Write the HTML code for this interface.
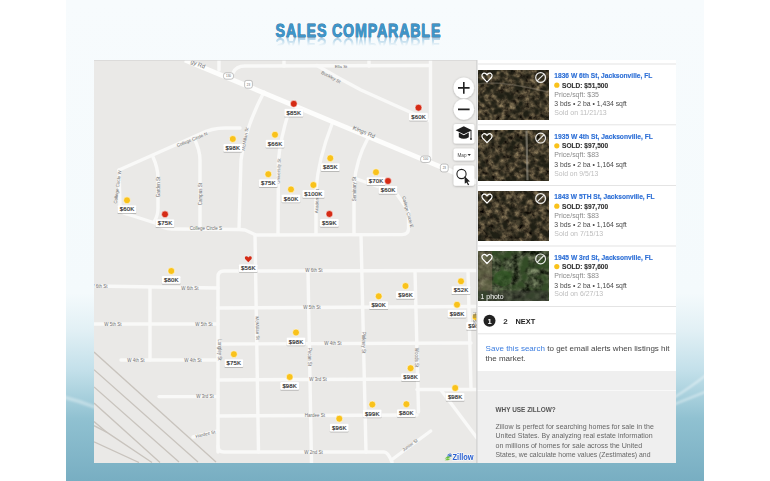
<!DOCTYPE html>
<html><head><meta charset="utf-8">
<style>
html,body{margin:0;padding:0;width:770px;height:481px;overflow:hidden;background:#fff;font-family:"Liberation Sans",sans-serif;}
#slide{position:absolute;left:66px;top:0;width:638px;height:481px;overflow:hidden;
 background:linear-gradient(180deg,#f6fbfd 0px,#f6fbfd 300px,#d8ecf3 350px,#a9d0df 395px,#86bacc 420px,#7ab0c4 481px);}
#panel{position:absolute;left:477px;top:60px;width:199px;height:403px;background:#fff;overflow:hidden;}
.t{position:absolute;white-space:nowrap;}
</style></head><body>
<svg width="638" height="481" viewBox="66 0 638 481" style="position:absolute;left:66px;top:0"><defs><linearGradient id="bgg" gradientUnits="userSpaceOnUse" x1="0" y1="0" x2="0" y2="481"><stop offset="0" stop-color="#f7fbfd"/><stop offset="0.61" stop-color="#f4fafc"/><stop offset="0.686" stop-color="#e2f0f5"/><stop offset="0.77" stop-color="#c3e0ea"/><stop offset="0.83" stop-color="#a5cedb"/><stop offset="0.87" stop-color="#90c1d1"/><stop offset="1" stop-color="#78aec2"/></linearGradient><filter id="blr" x="-10%" y="-50%" width="120%" height="200%"><feGaussianBlur stdDeviation="1.2"/></filter><linearGradient id="ttl" x1="0" y1="0" x2="0" y2="1"><stop offset="0" stop-color="#2a7db3"/><stop offset="0.35" stop-color="#6cb4dc"/><stop offset="0.55" stop-color="#3d92c4"/><stop offset="1" stop-color="#1c6698"/></linearGradient><linearGradient id="rfl" x1="0" y1="0" x2="0" y2="1"><stop offset="0" stop-color="#6fb0d4" stop-opacity="0.55"/><stop offset="1" stop-color="#9fcbe3" stop-opacity="0"/></linearGradient></defs><rect x="66" y="0" width="638" height="481" fill="url(#bgg)"/><g filter="url(#blr)" fill="none" stroke="#fff"><path d="M60,396 Q80,401 100,409" stroke-width="3.5" opacity="0.35"/><path d="M670,400 Q690,388 710,372" stroke-width="2" opacity="0.5"/><path d="M670,406 Q690,398 710,390" stroke-width="2.4" opacity="0.45"/></g><defs><linearGradient id="ttl2" gradientUnits="userSpaceOnUse" x1="0" y1="23" x2="0" y2="37.5"><stop offset="0" stop-color="#3f95c8"/><stop offset="0.3" stop-color="#74b9de"/><stop offset="0.5" stop-color="#3a8fc3"/><stop offset="0.8" stop-color="#2a7bb0"/><stop offset="1" stop-color="#1b6598"/></linearGradient><linearGradient id="rfm" gradientUnits="userSpaceOnUse" x1="0" y1="37.5" x2="0" y2="46"><stop offset="0" stop-color="#fff" stop-opacity="0.55"/><stop offset="1" stop-color="#fff" stop-opacity="0"/></linearGradient><mask id="rmask" maskUnits="userSpaceOnUse" x="66" y="37" width="638" height="10"><rect x="66" y="37.6" width="638" height="9" fill="url(#rfm)"/></mask></defs><g transform="translate(275.6,37.2) scale(0.75,1)"><text x="0" y="0" font-family="Liberation Sans" font-weight="bold" font-size="19" letter-spacing="1.1" fill="url(#ttl2)" stroke="#185d8c" stroke-width="0.75" stroke-linejoin="round" paint-order="stroke">SALES COMPARABLE</text></g><g transform="translate(275.6,37.2) scale(0.75,1)"><text x="0" y="0" font-family="Liberation Sans" font-weight="bold" font-size="19" letter-spacing="1.1" fill="url(#ttl2)">SALES COMPARABLE</text></g><g mask="url(#rmask)"><g transform="translate(275.6,38.2) scale(0.75,-1)"><text x="0" y="0" font-family="Liberation Sans" font-weight="bold" font-size="19" letter-spacing="1.1" fill="#5aa3cf">SALES COMPARABLE</text></g></g></svg>
<svg width="770" height="481" viewBox="0 0 770 481" style="position:absolute;left:0;top:0"><defs>
<clipPath id="mc"><rect x="94" y="60" width="383" height="403"/></clipPath>
<filter id="sh" x="-30%" y="-30%" width="160%" height="180%"><feDropShadow dx="0" dy="0.6" stdDeviation="0.5" flood-color="#000" flood-opacity="0.35"/></filter>
<filter id="sh2" x="-30%" y="-30%" width="160%" height="160%"><feDropShadow dx="0" dy="0.5" stdDeviation="0.8" flood-color="#000" flood-opacity="0.3"/></filter>
<filter id="aer" x="0" y="0" width="100%" height="100%"><feTurbulence type="fractalNoise" baseFrequency="0.35" numOctaves="3" seed="3"/><feColorMatrix type="matrix" values="0.35 0 0 0 0.02  0.3 0.1 0 0 0.03  0.2 0 0 0 0.0  0 0 0 0 1"/></filter>
</defs><g clip-path="url(#mc)"><rect x="94" y="60" width="383" height="403" fill="#eae9e7"/><g stroke="#c8c3bd" stroke-width="1.3" fill="none"><path d="M94,352 L216,462"/><path d="M94,369.7 L198,462"/><path d="M94,387 L179,462"/><path d="M94,403 L160,462.5"/><path d="M94,421.6 L107,432.4 L152,462.5"/><path d="M94,425.7 L107,432.4"/><path d="M94,441.9 L139,462.5"/></g><g stroke="#f9f9f8" stroke-width="3.4" fill="none" stroke-linecap="round" stroke-linejoin="round"><path d="M219,60 L219,70"/><path d="M233,73 Q236,66 245,66 L430,65.5"/><path d="M284,60 L284,66"/><path d="M369,60 L369,66"/><path d="M430.5,60 L430.5,158"/><path d="M317,65.5 Q338,78 361,90 L430,121"/><path d="M264,92 Q245,128 241,160 L239,229"/><path d="M119,170 L200,134 Q212,128 225,128 L240,128"/><path d="M119,170 L120,207 Q121,213 127,214 L155,223 Q163,229 172,229 L239,229.5 L245,230 L256,235 L402,234.6 Q408.6,234.6 408.6,228 L408.6,211 L396,193 L354,178"/><path d="M153,157 Q158,168 158,178 L158,208 Q158,216 154,222"/><path d="M194,138 Q200,150 200,160 L200,229"/><path d="M289,111 Q280,140 278.5,160 L278,234"/><path d="M332,124 Q318,160 316,190 L316,234"/><path d="M368,138 Q356,160 354,185 L354,234"/><path d="M94,286 L218,288"/><path d="M218,452 L218,277 Q218,271 224,271 L477,270.5"/><path d="M150,288 L150,360"/><path d="M94,324 L218,324"/><path d="M121,360 L218,360"/><path d="M159,396.6 L218,396.6"/><path d="M193,437 L218,431"/><path d="M218,308 L477,306.5"/><path d="M218,344 L471,343"/><path d="M218,380 L417,379"/><path d="M417,389.5 L477,389.5"/><path d="M218,416 L417,415"/><path d="M218,446 Q218,452 224,452 L384,452 Q388,452 392,462"/><path d="M255,235 L258.5,452"/><path d="M308,271 L311.5,463"/><path d="M361,235 L366,452"/><path d="M415,271 L418.5,412"/><path d="M468,271 L471,389.5"/><path d="M441,390 L477,438"/><path d="M392,459.5 L430.7,431"/></g><path d="M185,60 L477,182" stroke="#fdfdfc" stroke-width="4.8" fill="none"/><g fill="#fff" stroke="#9a9a9a" stroke-width="0.6"><rect x="223.5" y="72.8" width="10" height="6.4" rx="2.5"/><rect x="244.6" y="80.4" width="7.8" height="7.8" rx="2.2"/></g><g fill="#fff" stroke="#9a9a9a" stroke-width="0.6"><rect x="420.6" y="156.1" width="10" height="6.4" rx="2.5"/><rect x="440.4" y="164.1" width="7.8" height="7.8" rx="2.2"/></g><g font-family="Liberation Sans" font-size="3" fill="#666" text-anchor="middle"><text x="228.5" y="77">130</text><text x="248.5" y="86">23</text><text x="425.6" y="160.4">100</text><text x="444.3" y="169.2">23</text></g><g font-family="Liberation Sans" font-size="4.2" fill="#6e6e6e"><text x="198" y="66.09" font-size="5.8" text-anchor="middle" transform="rotate(22 198 64)">gy Rd</text><text x="341" y="68.08" font-size="4.4" text-anchor="middle">Ella St</text><text x="331" y="78.62" font-size="4.5" text-anchor="middle" transform="rotate(28 331 77)">Buckley St</text><text x="364" y="134.09" font-size="5.8" text-anchor="middle" transform="rotate(23 364 132)">Kings Rd</text><text x="192" y="141.12" font-size="4.5" text-anchor="middle" transform="rotate(-22 192 139.5)">College Circle N</text><text x="117.5" y="188.62" font-size="4.5" text-anchor="middle" transform="rotate(-82 117.5 187)">College Circle W</text><text x="158.3" y="188.62" font-size="4.5" text-anchor="middle" transform="rotate(-90 158.3 187)">Garden St</text><text x="200" y="195.62" font-size="4.5" text-anchor="middle" transform="rotate(-90 200 194)">Campus St</text><text x="245" y="140.62" font-size="4.5" text-anchor="middle" transform="rotate(-80 245 139)">McMillan St</text><text x="278.5" y="172.62" font-size="4.5" text-anchor="middle" transform="rotate(-88 278.5 171)">University St</text><text x="316.8" y="202.62" font-size="4.5" text-anchor="middle" transform="rotate(-88 316.8 201)">Academy St</text><text x="354" y="190.62" font-size="4.5" text-anchor="middle" transform="rotate(-90 354 189)">Seminary St</text><text x="408" y="213.62" font-size="4.5" text-anchor="middle" transform="rotate(75 408 212)">College Circle E</text><text x="206" y="230.12" font-size="4.5" text-anchor="middle">College Circle S</text><text x="99" y="287.62" font-size="4.5" text-anchor="middle">W 6th St</text><text x="190" y="289.62" font-size="4.5" text-anchor="middle">W 6th St</text><text x="314" y="272.12" font-size="4.5" text-anchor="middle">W 6th St</text><text x="312" y="309.12" font-size="4.5" text-anchor="middle">W 5th St</text><text x="113" y="325.62" font-size="4.5" text-anchor="middle">W 5th St</text><text x="204" y="325.62" font-size="4.5" text-anchor="middle">W 5th St</text><text x="136" y="361.62" font-size="4.5" text-anchor="middle">W 4th St</text><text x="193" y="362.12" font-size="4.5" text-anchor="middle">W 4th St</text><text x="333" y="344.62" font-size="4.5" text-anchor="middle">W 4th St</text><text x="205" y="398.22" font-size="4.5" text-anchor="middle">W 3rd St</text><text x="318" y="381.12" font-size="4.5" text-anchor="middle">W 3rd St</text><text x="205.5" y="435.62" font-size="4.5" text-anchor="middle" transform="rotate(-14 205.5 434)">Hardee St</text><text x="315" y="417.12" font-size="4.5" text-anchor="middle">Hardee St</text><text x="313.5" y="453.62" font-size="4.5" text-anchor="middle">W 2nd St</text><text x="219.5" y="351.62" font-size="4.5" text-anchor="middle" transform="rotate(90 219.5 350)">Longley St</text><text x="257.5" y="329.62" font-size="4.5" text-anchor="middle" transform="rotate(88 257.5 328)">McMillan St</text><text x="310" y="358.62" font-size="4.5" text-anchor="middle" transform="rotate(90 310 357)">Pecan St</text><text x="364" y="344.12" font-size="4.5" text-anchor="middle" transform="rotate(90 364 342.5)">Pinkney St</text><text x="417" y="359.12" font-size="4.5" text-anchor="middle" transform="rotate(90 417 357.5)">Woods St</text><text x="410" y="446.62" font-size="4.5" text-anchor="middle" transform="rotate(-36 410 445)">Junior St</text></g><circle cx="293.8" cy="103.8" r="3.45" fill="#d52b15" stroke="#fff" stroke-width="0.7" stroke-opacity="0.8"/><rect x="284.3" y="108.8" width="18.9" height="7.8" rx="1.2" fill="#fff" filter="url(#sh)"/><text x="293.8" y="114.9" font-family="Liberation Sans" font-size="6" fill="#333" stroke="#333" stroke-width="0.2" letter-spacing="0.15" text-anchor="middle">$85K</text><circle cx="418.5" cy="107.7" r="3.45" fill="#d52b15" stroke="#fff" stroke-width="0.7" stroke-opacity="0.8"/><rect x="409.0" y="112.7" width="18.9" height="7.8" rx="1.2" fill="#fff" filter="url(#sh)"/><text x="418.5" y="118.8" font-family="Liberation Sans" font-size="6" fill="#333" stroke="#333" stroke-width="0.2" letter-spacing="0.15" text-anchor="middle">$60K</text><circle cx="232.8" cy="139" r="3.45" fill="#f9c21b" stroke="#fff" stroke-width="0.7" stroke-opacity="0.8"/><rect x="223.3" y="144.0" width="18.9" height="7.8" rx="1.2" fill="#fff" filter="url(#sh)"/><text x="232.8" y="150.1" font-family="Liberation Sans" font-size="6" fill="#333" stroke="#333" stroke-width="0.2" letter-spacing="0.15" text-anchor="middle">$98K</text><circle cx="275" cy="134.7" r="3.45" fill="#f9c21b" stroke="#fff" stroke-width="0.7" stroke-opacity="0.8"/><rect x="265.5" y="139.7" width="18.9" height="7.8" rx="1.2" fill="#fff" filter="url(#sh)"/><text x="275" y="145.8" font-family="Liberation Sans" font-size="6" fill="#333" stroke="#333" stroke-width="0.2" letter-spacing="0.15" text-anchor="middle">$66K</text><circle cx="330.3" cy="158.2" r="3.45" fill="#f9c21b" stroke="#fff" stroke-width="0.7" stroke-opacity="0.8"/><rect x="320.8" y="163.2" width="18.9" height="7.8" rx="1.2" fill="#fff" filter="url(#sh)"/><text x="330.3" y="169.3" font-family="Liberation Sans" font-size="6" fill="#333" stroke="#333" stroke-width="0.2" letter-spacing="0.15" text-anchor="middle">$85K</text><circle cx="268.3" cy="174.2" r="3.45" fill="#f9c21b" stroke="#fff" stroke-width="0.7" stroke-opacity="0.8"/><rect x="258.8" y="179.2" width="18.9" height="7.8" rx="1.2" fill="#fff" filter="url(#sh)"/><text x="268.3" y="185.3" font-family="Liberation Sans" font-size="6" fill="#333" stroke="#333" stroke-width="0.2" letter-spacing="0.15" text-anchor="middle">$75K</text><circle cx="376" cy="172.2" r="3.45" fill="#f9c21b" stroke="#fff" stroke-width="0.7" stroke-opacity="0.8"/><rect x="366.5" y="177.2" width="18.9" height="7.8" rx="1.2" fill="#fff" filter="url(#sh)"/><text x="376" y="183.3" font-family="Liberation Sans" font-size="6" fill="#333" stroke="#333" stroke-width="0.2" letter-spacing="0.15" text-anchor="middle">$70K</text><circle cx="388" cy="181" r="3.45" fill="#d52b15" stroke="#fff" stroke-width="0.7" stroke-opacity="0.8"/><rect x="378.5" y="186.0" width="18.9" height="7.8" rx="1.2" fill="#fff" filter="url(#sh)"/><text x="388" y="192.1" font-family="Liberation Sans" font-size="6" fill="#333" stroke="#333" stroke-width="0.2" letter-spacing="0.15" text-anchor="middle">$60K</text><circle cx="291" cy="189.4" r="3.45" fill="#f9c21b" stroke="#fff" stroke-width="0.7" stroke-opacity="0.8"/><rect x="281.5" y="194.4" width="18.9" height="7.8" rx="1.2" fill="#fff" filter="url(#sh)"/><text x="291" y="200.5" font-family="Liberation Sans" font-size="6" fill="#333" stroke="#333" stroke-width="0.2" letter-spacing="0.15" text-anchor="middle">$60K</text><circle cx="313.4" cy="185" r="3.45" fill="#f9c21b" stroke="#fff" stroke-width="0.7" stroke-opacity="0.8"/><rect x="302.3" y="190.0" width="22.3" height="7.8" rx="1.2" fill="#fff" filter="url(#sh)"/><text x="313.4" y="196.1" font-family="Liberation Sans" font-size="6" fill="#333" stroke="#333" stroke-width="0.2" letter-spacing="0.15" text-anchor="middle">$100K</text><circle cx="127" cy="200.3" r="3.45" fill="#f9c21b" stroke="#fff" stroke-width="0.7" stroke-opacity="0.8"/><rect x="117.5" y="205.3" width="18.9" height="7.8" rx="1.2" fill="#fff" filter="url(#sh)"/><text x="127" y="211.4" font-family="Liberation Sans" font-size="6" fill="#333" stroke="#333" stroke-width="0.2" letter-spacing="0.15" text-anchor="middle">$60K</text><circle cx="165" cy="214.3" r="3.45" fill="#d52b15" stroke="#fff" stroke-width="0.7" stroke-opacity="0.8"/><rect x="155.5" y="219.3" width="18.9" height="7.8" rx="1.2" fill="#fff" filter="url(#sh)"/><text x="165" y="225.4" font-family="Liberation Sans" font-size="6" fill="#333" stroke="#333" stroke-width="0.2" letter-spacing="0.15" text-anchor="middle">$75K</text><circle cx="329.4" cy="214" r="3.45" fill="#d52b15" stroke="#fff" stroke-width="0.7" stroke-opacity="0.8"/><rect x="319.9" y="219.0" width="18.9" height="7.8" rx="1.2" fill="#fff" filter="url(#sh)"/><text x="329.4" y="225.1" font-family="Liberation Sans" font-size="6" fill="#333" stroke="#333" stroke-width="0.2" letter-spacing="0.15" text-anchor="middle">$59K</text><circle cx="171.3" cy="271" r="3.45" fill="#f9c21b" stroke="#fff" stroke-width="0.7" stroke-opacity="0.8"/><rect x="161.8" y="276.0" width="18.9" height="7.8" rx="1.2" fill="#fff" filter="url(#sh)"/><text x="171.3" y="282.1" font-family="Liberation Sans" font-size="6" fill="#333" stroke="#333" stroke-width="0.2" letter-spacing="0.15" text-anchor="middle">$80K</text><path d="M248.3,262.2 L245.10000000000002,258.9 Q244.3,256.59999999999997 246.3,256.2 Q247.70000000000002,256.2 248.3,257.59999999999997 Q248.9,256.2 250.3,256.2 Q252.3,256.59999999999997 251.5,258.9 Z" fill="#d52b15"/><rect x="238.8" y="264.2" width="18.9" height="7.8" rx="1.2" fill="#fff" filter="url(#sh)"/><text x="248.3" y="270.3" font-family="Liberation Sans" font-size="6" fill="#333" stroke="#333" stroke-width="0.2" letter-spacing="0.15" text-anchor="middle">$56K</text><circle cx="405.5" cy="286" r="3.45" fill="#f9c21b" stroke="#fff" stroke-width="0.7" stroke-opacity="0.8"/><rect x="396.0" y="291.0" width="18.9" height="7.8" rx="1.2" fill="#fff" filter="url(#sh)"/><text x="405.5" y="297.1" font-family="Liberation Sans" font-size="6" fill="#333" stroke="#333" stroke-width="0.2" letter-spacing="0.15" text-anchor="middle">$96K</text><circle cx="378.7" cy="296.3" r="3.45" fill="#f9c21b" stroke="#fff" stroke-width="0.7" stroke-opacity="0.8"/><rect x="369.2" y="301.3" width="18.9" height="7.8" rx="1.2" fill="#fff" filter="url(#sh)"/><text x="378.7" y="307.4" font-family="Liberation Sans" font-size="6" fill="#333" stroke="#333" stroke-width="0.2" letter-spacing="0.15" text-anchor="middle">$90K</text><circle cx="461" cy="281.3" r="3.45" fill="#f9c21b" stroke="#fff" stroke-width="0.7" stroke-opacity="0.8"/><rect x="451.5" y="286.3" width="18.9" height="7.8" rx="1.2" fill="#fff" filter="url(#sh)"/><text x="461" y="292.4" font-family="Liberation Sans" font-size="6" fill="#333" stroke="#333" stroke-width="0.2" letter-spacing="0.15" text-anchor="middle">$52K</text><circle cx="457" cy="304.7" r="3.45" fill="#f9c21b" stroke="#fff" stroke-width="0.7" stroke-opacity="0.8"/><rect x="447.5" y="309.7" width="18.9" height="7.8" rx="1.2" fill="#fff" filter="url(#sh)"/><text x="457" y="315.8" font-family="Liberation Sans" font-size="6" fill="#333" stroke="#333" stroke-width="0.2" letter-spacing="0.15" text-anchor="middle">$98K</text><circle cx="475.6" cy="317" r="3.45" fill="#f9c21b" stroke="#fff" stroke-width="0.7" stroke-opacity="0.8"/><rect x="466.1" y="322.0" width="18.9" height="7.8" rx="1.2" fill="#fff" filter="url(#sh)"/><text x="475.6" y="328.1" font-family="Liberation Sans" font-size="6" fill="#333" stroke="#333" stroke-width="0.2" letter-spacing="0.15" text-anchor="middle">$98K</text><circle cx="296" cy="332.5" r="3.45" fill="#f9c21b" stroke="#fff" stroke-width="0.7" stroke-opacity="0.8"/><rect x="286.5" y="337.5" width="18.9" height="7.8" rx="1.2" fill="#fff" filter="url(#sh)"/><text x="296" y="343.6" font-family="Liberation Sans" font-size="6" fill="#333" stroke="#333" stroke-width="0.2" letter-spacing="0.15" text-anchor="middle">$98K</text><circle cx="233.9" cy="354.2" r="3.45" fill="#f9c21b" stroke="#fff" stroke-width="0.7" stroke-opacity="0.8"/><rect x="224.4" y="359.2" width="18.9" height="7.8" rx="1.2" fill="#fff" filter="url(#sh)"/><text x="233.9" y="365.3" font-family="Liberation Sans" font-size="6" fill="#333" stroke="#333" stroke-width="0.2" letter-spacing="0.15" text-anchor="middle">$75K</text><circle cx="289.7" cy="377" r="3.45" fill="#f9c21b" stroke="#fff" stroke-width="0.7" stroke-opacity="0.8"/><rect x="280.2" y="382.0" width="18.9" height="7.8" rx="1.2" fill="#fff" filter="url(#sh)"/><text x="289.7" y="388.1" font-family="Liberation Sans" font-size="6" fill="#333" stroke="#333" stroke-width="0.2" letter-spacing="0.15" text-anchor="middle">$98K</text><circle cx="410.6" cy="368.2" r="3.45" fill="#f9c21b" stroke="#fff" stroke-width="0.7" stroke-opacity="0.8"/><rect x="401.1" y="373.2" width="18.9" height="7.8" rx="1.2" fill="#fff" filter="url(#sh)"/><text x="410.6" y="379.3" font-family="Liberation Sans" font-size="6" fill="#333" stroke="#333" stroke-width="0.2" letter-spacing="0.15" text-anchor="middle">$98K</text><circle cx="455.2" cy="388" r="3.45" fill="#f9c21b" stroke="#fff" stroke-width="0.7" stroke-opacity="0.8"/><rect x="445.7" y="393.0" width="18.9" height="7.8" rx="1.2" fill="#fff" filter="url(#sh)"/><text x="455.2" y="399.1" font-family="Liberation Sans" font-size="6" fill="#333" stroke="#333" stroke-width="0.2" letter-spacing="0.15" text-anchor="middle">$98K</text><circle cx="372.3" cy="404.5" r="3.45" fill="#f9c21b" stroke="#fff" stroke-width="0.7" stroke-opacity="0.8"/><rect x="362.8" y="409.5" width="18.9" height="7.8" rx="1.2" fill="#fff" filter="url(#sh)"/><text x="372.3" y="415.6" font-family="Liberation Sans" font-size="6" fill="#333" stroke="#333" stroke-width="0.2" letter-spacing="0.15" text-anchor="middle">$99K</text><circle cx="406.4" cy="404.2" r="3.45" fill="#f9c21b" stroke="#fff" stroke-width="0.7" stroke-opacity="0.8"/><rect x="396.9" y="409.2" width="18.9" height="7.8" rx="1.2" fill="#fff" filter="url(#sh)"/><text x="406.4" y="415.3" font-family="Liberation Sans" font-size="6" fill="#333" stroke="#333" stroke-width="0.2" letter-spacing="0.15" text-anchor="middle">$80K</text><circle cx="339.3" cy="418.7" r="3.45" fill="#f9c21b" stroke="#fff" stroke-width="0.7" stroke-opacity="0.8"/><rect x="329.8" y="423.7" width="18.9" height="7.8" rx="1.2" fill="#fff" filter="url(#sh)"/><text x="339.3" y="429.8" font-family="Liberation Sans" font-size="6" fill="#333" stroke="#333" stroke-width="0.2" letter-spacing="0.15" text-anchor="middle">$96K</text><rect x="94" y="59.6" width="383" height="1" fill="#d2d2d2"/></g><g filter="url(#sh2)" fill="#fff"><circle cx="463.8" cy="87.9" r="10.3"/><circle cx="463.8" cy="109.4" r="10.3"/><rect x="453.6" y="123.9" width="20.8" height="19.6" rx="2"/><rect x="453.6" y="148.4" width="20.8" height="12.2" rx="2"/><rect x="453.6" y="165.5" width="20.8" height="20.3" rx="2"/></g><g stroke="#222" stroke-width="1.6"><path d="M458,87.9 H469.6 M463.8,82.1 V93.7 M458,109.4 H469.6"/></g><path d="M455.6,130.2 L463.8,126.2 L472,130.2 L463.8,134.2 Z" fill="#1e1e1e"/><path d="M458.8,132.4 V137.2 Q463.8,140.4 468.8,137.2 V132.4 L463.8,135.2 Z" fill="#1e1e1e"/><path d="M471,130.6 V138.5" stroke="#1e1e1e" stroke-width="0.9"/><circle cx="471" cy="139" r="0.9" fill="#1e1e1e"/><text x="462" y="156.6" font-family="Liberation Sans" font-size="4.6" fill="#444" text-anchor="middle">Map</text><path d="M467.5,154 h3.4 l-1.7,2 z" fill="#333"/><circle cx="461.5" cy="174" r="4.6" fill="none" stroke="#222" stroke-width="1.1"/><path d="M464.5,176 L470,181.5 L467.5,181.8 L469.2,184.8 L468,185.3 L466.5,182.4 L464.8,183.8 Z" fill="#222"/><path d="M446.5,456.6 L451.5,454 L451.5,456.8 Z" fill="#2f68d0"/><path d="M447.5,455.2 L450.5,453.6" stroke="#2f68d0" stroke-width="0.9"/><path d="M444.6,458.4 L447.5,456.6 L451,456.6 L448.2,458.4 Z M444.6,460.2 L447.2,458.8 L450.8,458.8 L448.2,460.2 Z" fill="#6cc23a"/><text x="452.6" y="460.2" font-family="Liberation Sans" font-weight="bold" font-size="8.2" fill="#2a60cf" stroke="#fff" stroke-width="0.9" paint-order="stroke" textLength="21" lengthAdjust="spacingAndGlyphs">Zillow</text><text x="473" y="318" font-family="Liberation Sans" font-size="4.5" fill="#6e6e6e" text-anchor="middle" transform="rotate(90 473 318)">Hill St</text></svg>
<svg width="770" height="481" viewBox="0 0 770 481" style="position:absolute;left:0;top:0"><defs><clipPath id="pc"><rect x="476" y="60" width="200" height="403"/></clipPath><filter id="aer1" x="0" y="0" width="100%" height="100%" color-interpolation-filters="sRGB"><feTurbulence type="fractalNoise" baseFrequency="0.2" numOctaves="3" seed="7" result="n1"/><feColorMatrix in="n1" type="matrix" values="0.8 0 0 0 -0.09  0.72 0 0 0 -0.09  0.55 0 0 0 -0.08  0 0 0 0 1" result="base"/><feTurbulence type="fractalNoise" baseFrequency="0.13" numOctaves="2" seed="21" result="n2"/><feColorMatrix in="n2" type="matrix" values="0 0 0 0 0.12  0 0 0 0 0.12  0 0 0 0 0.08  -3.2 0 0 0 1.9" result="trees"/><feComposite in="trees" in2="base" operator="over"/><feGaussianBlur stdDeviation="0.35"/></filter><filter id="aer4" x="0" y="0" width="100%" height="100%" color-interpolation-filters="sRGB"><feTurbulence type="fractalNoise" baseFrequency="0.16" numOctaves="3" seed="11" result="n1"/><feColorMatrix in="n1" type="matrix" values="0.72 0 0 0 -0.1  0.76 0 0 0 -0.08  0.62 0 0 0 -0.1  0 0 0 0 1" result="base"/><feTurbulence type="fractalNoise" baseFrequency="0.1" numOctaves="2" seed="5" result="n2"/><feColorMatrix in="n2" type="matrix" values="0 0 0 0 0.2  0 0 0 0 0.3  0 0 0 0 0.15  -3.2 0 0 0 1.85" result="trees"/><feComposite in="trees" in2="base" operator="over"/><feGaussianBlur stdDeviation="0.35"/></filter></defs><g clip-path="url(#pc)"><rect x="477" y="60" width="199" height="311" fill="#fff"/><rect x="477" y="371" width="199" height="92" fill="#efefef"/><rect x="477" y="390" width="199" height="1" fill="#f8f8f8"/><rect x="476.3" y="60" width="1.2" height="403" fill="#cfcfcf"/><rect x="477.5" y="63.5" width="199" height="1" fill="#e4e4e4"/><rect x="477.5" y="124.3" width="199" height="1" fill="#e4e4e4"/><rect x="477.5" y="185.0" width="199" height="1" fill="#e4e4e4"/><rect x="477.5" y="245.5" width="199" height="1" fill="#e4e4e4"/><rect x="477.5" y="306.0" width="199" height="1" fill="#e4e4e4"/><rect x="477.5" y="333.3" width="199" height="1" fill="#e4e4e4"/><rect x="478.2" y="70" width="70" height="49.6" fill="#3b3a2c" filter="url(#aer1)"/><path d="M478,84 Q500,80 548,92" stroke="#8a8070" stroke-width="1.5" opacity="0.45" fill="none"/><path d="M487,82.1 L482.6,77.5 Q480.8,74.3 483.8,73.1 Q485.8,72.7 487,74.9 Q488.2,72.7 490.2,73.1 Q493.2,74.3 491.4,77.5 Z" fill="none" stroke="#fff" stroke-width="1.2" stroke-linejoin="round"/><circle cx="540.6" cy="77.5" r="4.9" fill="none" stroke="#fff" stroke-width="1.2" opacity="0.9"/><path d="M537.4,80.7 L543.8,74.3" stroke="#fff" stroke-width="1.2" opacity="0.9"/><text x="554.3" y="78.3" font-family="Liberation Sans" font-weight="bold" font-size="6.9" fill="#2d6fd6" stroke="#2d6fd6" stroke-width="0.15" textLength="98" lengthAdjust="spacingAndGlyphs">1836 W 6th St, Jacksonville, FL</text><circle cx="556.8" cy="85.2" r="2.6" fill="#f9c21b"/><text x="562.1" y="87.5" font-family="Liberation Sans" font-weight="bold" font-size="6.9" fill="#333" stroke="#333" stroke-width="0.12" textLength="46" lengthAdjust="spacingAndGlyphs">SOLD: $51,500</text><text x="554.3" y="96.5" font-family="Liberation Sans" font-size="6.9" fill="#8a8a8a" textLength="44.6" lengthAdjust="spacingAndGlyphs">Price/sqft: $35</text><text x="554.3" y="106.1" font-family="Liberation Sans" font-size="6.9" fill="#4a4a4a" textLength="72.4" lengthAdjust="spacingAndGlyphs">3 bds • 2 ba • 1,434 sqft</text><text x="554.3" y="115.0" font-family="Liberation Sans" font-size="6.9" fill="#bdbdbd" textLength="52.4" lengthAdjust="spacingAndGlyphs">Sold on 11/21/13</text><rect x="478.2" y="130.6" width="70" height="49.6" fill="#3a382c" filter="url(#aer1)"/><path d="M526.5,130.6 L527.5,180.2" stroke="#9b968a" stroke-width="2.2" opacity="0.6"/><path d="M487,142.7 L482.6,138.1 Q480.8,134.9 483.8,133.7 Q485.8,133.29999999999998 487,135.5 Q488.2,133.29999999999998 490.2,133.7 Q493.2,134.9 491.4,138.1 Z" fill="none" stroke="#fff" stroke-width="1.2" stroke-linejoin="round"/><circle cx="540.6" cy="138.1" r="4.9" fill="none" stroke="#fff" stroke-width="1.2" opacity="0.9"/><path d="M537.4,141.29999999999998 L543.8,134.9" stroke="#fff" stroke-width="1.2" opacity="0.9"/><text x="554.3" y="138.9" font-family="Liberation Sans" font-weight="bold" font-size="6.9" fill="#2d6fd6" stroke="#2d6fd6" stroke-width="0.15" textLength="98.5" lengthAdjust="spacingAndGlyphs">1935 W 4th St, Jacksonville, FL</text><circle cx="556.8" cy="145.8" r="2.6" fill="#f9c21b"/><text x="562.1" y="148.1" font-family="Liberation Sans" font-weight="bold" font-size="6.9" fill="#333" stroke="#333" stroke-width="0.12" textLength="46" lengthAdjust="spacingAndGlyphs">SOLD: $97,500</text><text x="554.3" y="157.1" font-family="Liberation Sans" font-size="6.9" fill="#8a8a8a" textLength="44.6" lengthAdjust="spacingAndGlyphs">Price/sqft: $83</text><text x="554.3" y="166.7" font-family="Liberation Sans" font-size="6.9" fill="#4a4a4a" textLength="72.4" lengthAdjust="spacingAndGlyphs">3 bds • 2 ba • 1,164 sqft</text><text x="554.3" y="175.6" font-family="Liberation Sans" font-size="6.9" fill="#bdbdbd" textLength="44" lengthAdjust="spacingAndGlyphs">Sold on 9/5/13</text><rect x="478.2" y="191" width="70" height="49.6" fill="#3c3a2d" filter="url(#aer1)"/><path d="M487,203.1 L482.6,198.5 Q480.8,195.3 483.8,194.1 Q485.8,193.7 487,195.9 Q488.2,193.7 490.2,194.1 Q493.2,195.3 491.4,198.5 Z" fill="none" stroke="#fff" stroke-width="1.2" stroke-linejoin="round"/><circle cx="540.6" cy="198.5" r="4.9" fill="none" stroke="#fff" stroke-width="1.2" opacity="0.9"/><path d="M537.4,201.7 L543.8,195.3" stroke="#fff" stroke-width="1.2" opacity="0.9"/><text x="554.3" y="199.3" font-family="Liberation Sans" font-weight="bold" font-size="6.9" fill="#2d6fd6" stroke="#2d6fd6" stroke-width="0.15" textLength="100.3" lengthAdjust="spacingAndGlyphs">1843 W 5TH St, Jacksonville, FL</text><circle cx="556.8" cy="206.2" r="2.6" fill="#f9c21b"/><text x="562.1" y="208.5" font-family="Liberation Sans" font-weight="bold" font-size="6.9" fill="#333" stroke="#333" stroke-width="0.12" textLength="46" lengthAdjust="spacingAndGlyphs">SOLD: $97,700</text><text x="554.3" y="217.5" font-family="Liberation Sans" font-size="6.9" fill="#8a8a8a" textLength="44.6" lengthAdjust="spacingAndGlyphs">Price/sqft: $83</text><text x="554.3" y="227.1" font-family="Liberation Sans" font-size="6.9" fill="#4a4a4a" textLength="72.4" lengthAdjust="spacingAndGlyphs">3 bds • 2 ba • 1,164 sqft</text><text x="554.3" y="236.0" font-family="Liberation Sans" font-size="6.9" fill="#bdbdbd" textLength="48.9" lengthAdjust="spacingAndGlyphs">Sold on 7/15/13</text><rect x="478.2" y="251.4" width="70" height="49.6" fill="#2e3a24" filter="url(#aer4)"/><rect x="478.2" y="251.4" width="14" height="40" fill="#8a7660" opacity="0.45"/><rect x="478.2" y="290.4" width="70" height="10.6" fill="#3a3934" opacity="0.5"/><ellipse cx="503" cy="278.4" rx="9" ry="8" fill="#2f5a22" opacity="0.55"/><path d="M487,263.5 L482.6,258.9 Q480.8,255.7 483.8,254.49999999999997 Q485.8,254.09999999999997 487,256.29999999999995 Q488.2,254.09999999999997 490.2,254.49999999999997 Q493.2,255.7 491.4,258.9 Z" fill="none" stroke="#fff" stroke-width="1.2" stroke-linejoin="round"/><circle cx="540.6" cy="258.9" r="4.9" fill="none" stroke="#fff" stroke-width="1.2" opacity="0.9"/><path d="M537.4,262.1 L543.8,255.70000000000002" stroke="#fff" stroke-width="1.2" opacity="0.9"/><text x="554.3" y="259.7" font-family="Liberation Sans" font-weight="bold" font-size="6.9" fill="#2d6fd6" stroke="#2d6fd6" stroke-width="0.15" textLength="98.5" lengthAdjust="spacingAndGlyphs">1945 W 3rd St, Jacksonville, FL</text><circle cx="556.8" cy="266.6" r="2.6" fill="#f9c21b"/><text x="562.1" y="268.9" font-family="Liberation Sans" font-weight="bold" font-size="6.9" fill="#333" stroke="#333" stroke-width="0.12" textLength="46" lengthAdjust="spacingAndGlyphs">SOLD: $97,600</text><text x="554.3" y="277.9" font-family="Liberation Sans" font-size="6.9" fill="#8a8a8a" textLength="44.6" lengthAdjust="spacingAndGlyphs">Price/sqft: $83</text><text x="554.3" y="287.5" font-family="Liberation Sans" font-size="6.9" fill="#4a4a4a" textLength="72.4" lengthAdjust="spacingAndGlyphs">3 bds • 2 ba • 1,164 sqft</text><text x="554.3" y="296.4" font-family="Liberation Sans" font-size="6.9" fill="#bdbdbd" textLength="48.9" lengthAdjust="spacingAndGlyphs">Sold on 6/27/13</text><text x="480.6" y="299.2" font-family="Liberation Sans" font-size="6.6" fill="#fff" textLength="23" lengthAdjust="spacingAndGlyphs">1 photo</text><circle cx="489.5" cy="320.8" r="6" fill="#222"/><text x="489.5" y="323.5" font-family="Liberation Sans" font-weight="bold" font-size="7.6" fill="#fff" text-anchor="middle">1</text><text x="503.3" y="323.7" font-family="Liberation Sans" font-weight="bold" font-size="8" fill="#333">2</text><text x="515.5" y="323.7" font-family="Liberation Sans" font-weight="bold" font-size="7.6" fill="#222" textLength="19.7" lengthAdjust="spacingAndGlyphs">NEXT</text><text x="485.6" y="350.8" font-family="Liberation Sans" font-size="8" textLength="184" lengthAdjust="spacingAndGlyphs"><tspan fill="#3b7de0">Save this search</tspan><tspan fill="#444"> to get email alerts when listings hit</tspan></text><text x="485.6" y="361.2" font-family="Liberation Sans" font-size="8" fill="#444">the market.</text><text x="495.5" y="412.3" font-family="Liberation Sans" font-weight="bold" font-size="6.6" fill="#555" textLength="60.2" lengthAdjust="spacingAndGlyphs">WHY USE ZILLOW?</text><text x="495.5" y="429.2" font-family="Liberation Sans" font-size="6.9" fill="#666" textLength="158.4" lengthAdjust="spacingAndGlyphs">Zillow is perfect for searching homes for sale in the</text><text x="495.5" y="438.4" font-family="Liberation Sans" font-size="6.9" fill="#666" textLength="157.1" lengthAdjust="spacingAndGlyphs">United States. By analyzing real estate information</text><text x="495.5" y="447.7" font-family="Liberation Sans" font-size="6.9" fill="#666" textLength="146.7" lengthAdjust="spacingAndGlyphs">on millions of homes for sale across the United</text><text x="495.5" y="456.9" font-family="Liberation Sans" font-size="6.9" fill="#666" textLength="155" lengthAdjust="spacingAndGlyphs">States, we calculate home values (Zestimates) and</text><text x="495.5" y="468.4" font-family="Liberation Sans" font-size="6.9" fill="#666" textLength="118" lengthAdjust="spacingAndGlyphs">the Zillow Home Value Price Index</text></g></svg>
</body></html>
